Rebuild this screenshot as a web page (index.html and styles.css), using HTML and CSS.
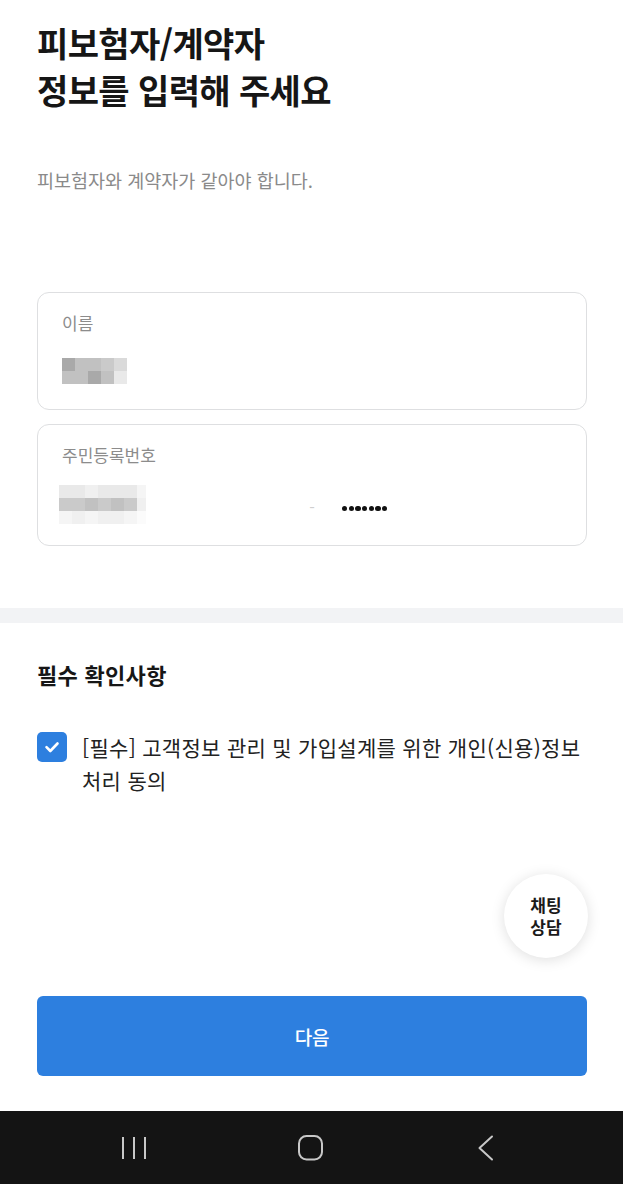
FILE: index.html
```html
<!DOCTYPE html>
<html lang="ko">
<head>
<meta charset="utf-8">
<title>피보험자/계약자 정보 입력</title>
<link rel="stylesheet" href="styles.css">
</head>
<body>
<div class="page">
  <main class="content">
    <section class="intro">
      <h1 class="title">피보험자/계약자<br>정보를 입력해 주세요</h1>
      <p class="subtitle">피보험자와 계약자가 같아야 합니다.</p>
    </section>

    <section class="fields">
      <div class="field field-name">
        <div class="field-label">이름</div>
        <div class="pixels pixels-name">
          <i class="c1"></i><i class="c3"></i><i class="c3"></i><i class="c4"></i><i class="c6"></i>
          <i class="c3"></i><i class="c3"></i><i class="c1"></i><i class="c3"></i><i class="c7"></i>
        </div>
      </div>

      <div class="field field-rrn">
        <div class="field-label">주민등록번호</div>
        <div class="rrn-row">
          <div class="rrn-front">
            <div class="pixels pixels-rrn">
              <i class="c7"></i><i class="c7"></i><i class="c8"></i><i class="c7"></i><i class="c7"></i><i class="c7"></i><i class="c9"></i>
              <i class="c4"></i><i class="c4"></i><i class="c3"></i><i class="c4"></i><i class="c3"></i><i class="c4"></i><i class="c8"></i>
              <i class="c9"></i><i class="c8"></i><i class="c9"></i><i class="c8"></i><i class="c8"></i><i class="c9"></i><i class="c10"></i>
            </div>
          </div>
          <div class="rrn-dash">-</div>
          <div class="rrn-back">
            <span class="dot"></span><span class="dot"></span><span class="dot"></span><span class="dot"></span><span class="dot"></span><span class="dot"></span><span class="dot"></span>
          </div>
        </div>
      </div>
    </section>

    <div class="divider"></div>

    <section class="agree">
      <h2 class="agree-title">필수 확인사항</h2>
      <div class="agree-row">
        <span class="checkbox">
          <svg viewBox="0 0 30 30" width="30" height="30" aria-hidden="true">
            <path d="M9.5 15.2 L13.3 19 L20.5 11.5" fill="none" stroke="#fff" stroke-width="2.6" stroke-linecap="round" stroke-linejoin="round"/>
          </svg>
        </span>
        <p class="agree-text">[필수] 고객정보 관리 및 가입설계를 위한 개인(신용)정보 처리 동의</p>
      </div>
    </section>
  </main>

  <div class="actions">
    <button class="btn-next" type="button">다음</button>
  </div>

  <nav class="sysbar">
    <svg class="sys-icon" viewBox="0 0 30 30" width="30" height="30" aria-hidden="true">
      <path d="M4 4 V26 M15 4 V26 M26 4 V26" stroke="#c8c8c8" stroke-width="2" fill="none"/>
    </svg>
    <svg class="sys-icon" viewBox="0 0 30 30" width="30" height="30" aria-hidden="true">
      <rect x="2" y="3" width="23" height="23.5" rx="7.5" stroke="#c8c8c8" stroke-width="2" fill="none"/>
    </svg>
    <svg class="sys-icon" viewBox="0 0 30 30" width="30" height="30" aria-hidden="true">
      <path d="M17 3.5 L4.5 15 L17 26.5" stroke="#c8c8c8" stroke-width="2" fill="none" stroke-linecap="round" stroke-linejoin="round"/>
    </svg>
  </nav>

  <button class="chat-fab" type="button"><span class="chat-line">채팅</span><span class="chat-line">상담</span></button>
</div>
</body>
</html>
```

FILE: styles.css
```css
* {
  box-sizing: border-box;
}

html, body {
  margin: 0;
  padding: 0;
  background: #fff;
}

body {
  font-family: "Noto Sans CJK KR", "Noto Sans", sans-serif;
  color: #1a1a1a;
}

.page {
  position: relative;
  width: 623px;
  min-height: 1184px;
  display: flex;
  flex-direction: column;
}

.content {
  flex: 1;
}

.intro {
  padding: 19px 37px 0;
}

.title {
  margin: 0;
  font-size: 34px;
  line-height: 47px;
  font-weight: 700;
  letter-spacing: -0.6px;
  color: #161616;
}

.subtitle {
  margin: 54px 0 0;
  font-size: 18.5px;
  line-height: 26px;
  letter-spacing: 0;
  color: #8a8a8a;
}

.fields {
  padding: 99px 36px 0 37px;
  display: flex;
  flex-direction: column;
  gap: 14px;
}

.field {
  border: 1px solid #dedfe1;
  border-radius: 12px;
  padding: 19px 24px 25px;
}

.field-rrn {
  padding-bottom: 21px;
}

.field-label {
  font-size: 17px;
  line-height: 22px;
  color: #8c8c8c;
  letter-spacing: 0;
}

.pixels {
  display: grid;
  grid-auto-rows: 13px;
}

.pixels i {
  display: block;
}

.pixels-name {
  margin-top: 24px;
  grid-template-columns: repeat(5, 13px);
}

.pixels-rrn {
  margin-left: -3px;
  grid-template-columns: repeat(6, 13px) 9px;
}

.c1 { background: #a9a9a9; }
.c3 { background: #c1c1c1; }
.c4 { background: #cacaca; }
.c6 { background: #dadada; }
.c7 { background: #e9e9e9; }
.c8 { background: #f0f0f0; }
.c9 { background: #f5f5f5; }
.c10 { background: #fbfbfb; }

.rrn-row {
  margin-top: 19px;
  display: flex;
  align-items: center;
}

.rrn-front {
  width: 238px;
}

.rrn-dash {
  width: 24px;
  text-align: center;
  color: #cfcfcf;
  font-size: 16px;
  line-height: 20px;
  margin-top: 5px;
}

.rrn-back {
  padding-left: 18px;
  display: flex;
  gap: 1.5px;
  margin-top: 8px;
}

.dot {
  width: 5.2px;
  height: 5.2px;
  border-radius: 50%;
  background: #111;
}

.divider {
  margin-top: 62px;
  height: 15px;
  background: #f2f3f5;
}

.agree {
  padding: 36px 37px 0;
}

.agree-title {
  margin: 0;
  font-size: 22px;
  line-height: 30px;
  font-weight: 700;
  letter-spacing: 0.3px;
  color: #161616;
}

.agree-row {
  margin-top: 42px;
  display: flex;
  align-items: flex-start;
  gap: 15px;
}

.checkbox {
  flex: none;
  width: 30px;
  height: 30px;
  border-radius: 5px;
  background: #2d7fdf;
  display: flex;
  margin-top: 1px;
}

.agree-text {
  margin: 0;
  font-size: 21px;
  line-height: 33px;
  letter-spacing: 0.3px;
  color: #222;
  padding-right: 0;
}

.actions {
  padding: 0 36px 35px 37px;
}

.btn-next {
  display: block;
  width: 100%;
  height: 80px;
  border: 0;
  border-radius: 6px;
  background: #2d7fdf;
  color: #fff;
  font-family: inherit;
  font-size: 19px;
  font-weight: 500;
  letter-spacing: -0.2px;
}

.sysbar {
  height: 73px;
  background: #141414;
  display: flex;
  justify-content: space-between;
  align-items: center;
  padding: 0 118px 0 119px;
}

.sys-icon {
  display: block;
}

.chat-fab {
  position: absolute;
  left: 504px;
  top: 874px;
  width: 84px;
  height: 84px;
  border: 0;
  border-radius: 50%;
  background: #fff;
  box-shadow: 0 2px 14px rgba(0, 0, 0, 0.13);
  font-family: inherit;
  font-size: 17px;
  font-weight: 700;
  color: #1a1a1a;
  padding: 0;
  display: flex;
  flex-direction: column;
  align-items: center;
  justify-content: center;
}

.chat-line {
  display: block;
  line-height: 22px;
}
```
